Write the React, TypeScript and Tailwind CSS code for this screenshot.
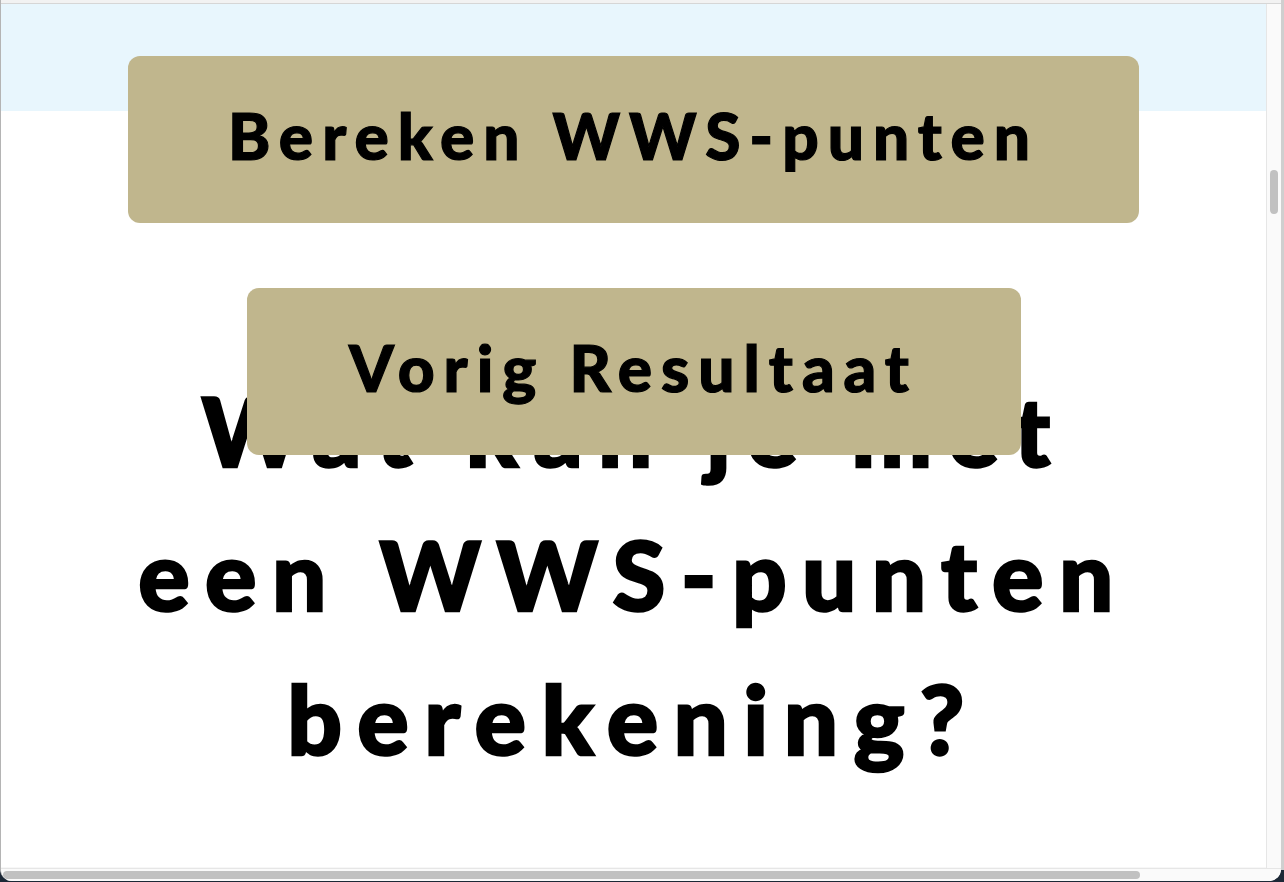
import React from "react";

export default function App() {
  const font = { fontFamily: "Lato, 'Noto Sans', sans-serif" };
  return (
    <div className="flex h-[882px] w-[1284px] overflow-hidden bg-[#1c2836]" style={font}>
      <div className="flex h-[881px] w-[1281px] flex-col overflow-hidden rounded-b-[12px] border-l border-[#b4b4b4] bg-[#f7f7f7]">
        <div className="h-[3px] shrink-0 bg-[#f2f2f2]" />
        <div className="h-px shrink-0 bg-[#d6d6d6]" />
        <div className="flex min-h-0 flex-1">
          <div className="h-[863px] w-[1265px] shrink-0 overflow-hidden bg-[linear-gradient(to_bottom,#e8f6fd_107px,#ffffff_107px)]">
            <div className="flex flex-col items-center pt-[52px]">
              <button className="flex h-[167px] w-[1011px] items-center justify-center rounded-[12px] bg-[#c0b68d] pb-[8px] text-[64px] font-black leading-none tracking-[0.14em] text-black [-webkit-text-stroke:1.2px_black]">
                Bereken WWS-punten
              </button>
              <button className="relative z-10 mt-[65px] mb-[-97px] flex h-[167px] w-[774px] items-center justify-center rounded-[12px] bg-[#c0b68d] pb-[8px] text-[64px] font-black leading-none tracking-[0.14em] text-black [-webkit-text-stroke:1.2px_black]">
                Vorig Resultaat
              </button>
              <h1 className="w-[1100px] text-center text-[96px] font-black leading-[144px] tracking-[0.16em] text-black [-webkit-text-stroke:2.5px_black]">
                Wat kan je met
                <br />
                een WWS-punten
                <br />
                berekening?
              </h1>
            </div>
          </div>
          <div className="relative w-[15px] shrink-0 border-l border-[#e6e6e6] bg-[#fafafa]">
            <div className="absolute left-[3px] top-[166px] h-[44px] w-[8px] rounded-full bg-[#c1c1c1]" />
          </div>
        </div>
        <div className="relative h-[13px] shrink-0 border-t border-[#e6e6e6] bg-[#fafafa]">
          <div className="absolute left-[2px] top-[2px] h-[8px] w-[1137px] rounded-full bg-[#c1c1c1]" />
        </div>
      </div>
      <div className="h-[870px] w-[3px] bg-[#cfcfcf]" />
    </div>
  );
}
